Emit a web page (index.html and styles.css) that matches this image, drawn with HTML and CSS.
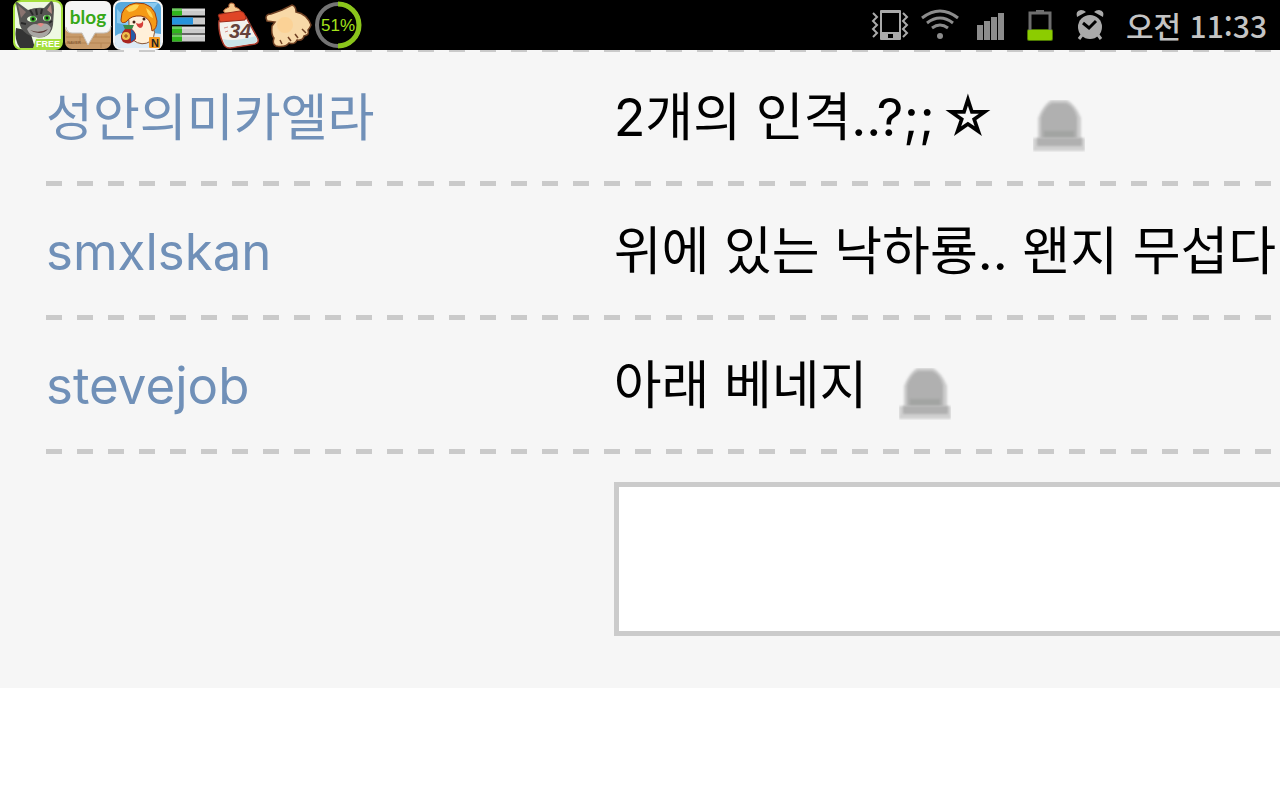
FILE: index.html
```
<!DOCTYPE html>
<html lang="ko">
  <head>
    <meta charset="UTF-8" />
    <meta name="viewport" content="width=device-width, initial-scale=1.0" />
    <title>댓글</title>
    <link rel="stylesheet" href="styles.css">
  </head>

  <body>
    <header class="status-bar">
      <div class="icons">
        <!-- talking cat -->
        <svg viewBox="0 0 50 50">
          <rect x="1" y="1" width="48" height="48" rx="7" fill="#eef8e2" stroke="#a5e03c" stroke-width="2" />
          <path d="M3 28 Q1 40 7 48 L22 48 L17 31Z" fill="#343434" />
          <path d="M3 4 Q1 2 4 2 L15 10 Q23 7 31 8 L38 1 Q41 1 41 10 L40 25 Q39 34 31 37 Q21 38 14 34 Q6 29 6 19Z" fill="#555553" />
          <path d="M5 5 L13 12 L8 18Z" fill="#8a7470" />
          <path d="M38 4 L39 14 L34 10Z" fill="#b28a84" />
          <path d="M17 10 L20 15 M23 9 L24 15 M29 9 L28 14 M8 23 L13 24 M39 21 L36 23" stroke="#292929" stroke-width="2" />
          <path d="M14 29 Q20 22 26 25 Q34 21 38 28 Q36 37 26 38 Q17 37 14 29Z" fill="#a8a6a3" />
          <path d="M17 30 Q26 34 35 29 Q32 33 26 33 Q21 33 17 30Z" fill="#5b3a38" />
          <path d="M24 24 Q28 22 31 24 L28 27Z" fill="#e58a86" />
          <ellipse cx="19" cy="19" rx="5" ry="3" fill="#e8f6dc" />
          <ellipse cx="34" cy="18" rx="4" ry="3" fill="#e8f6dc" />
          <circle cx="20" cy="19" r="3" fill="#3aa52d" />
          <circle cx="34" cy="18" r="3" fill="#3aa52d" />
          <circle cx="20" cy="19" r="1.5" fill="#111" />
          <circle cx="34" cy="18" r="1.4" fill="#111" />
          <path d="M20 48 L23 39 H49 V43 Q49 48 44 48Z" fill="#a5e03c" />
          <text x="35" y="47" class="label-free">FREE</text>
        </svg>
        <!-- blog -->
        <svg viewBox="0 0 50 50">
          <rect x="2" y="1" width="46" height="48" rx="7" fill="#c89b6a" />
          <path d="M3 37 H47 M3 43 H47 M17 36 V43 M33 31 V37 M38 43 V48" stroke="#b48453" />
          <path d="M9 1 H41 Q48 1 48 8 V26 Q48 33 41 33 H32 L25 45 L19 33 H9 Q2 33 2 26 V8 Q2 1 9 1Z" fill="#f5f5f5" />
          <path d="M3 27 Q4 33 9 33 H19 L25 45 L32 33 H41 Q47 33 48 26" fill="none" stroke="#c6c2bd" />
          <text x="25" y="24" class="label-blog">blog</text>
          <text x="11" y="44" class="label-naver">NAVER</text>
        </svg>
        <!-- mushroom game -->
        <svg viewBox="0 0 50 50">
          <rect x="1" y="1" width="48" height="48" rx="7" fill="#58a9dd" stroke="#f4f4f4" stroke-width="2" />
          <path d="M2 36 Q10 30 17 36 Q28 30 48 34 V42 Q48 48 42 48 H8 Q2 48 2 42Z" fill="#dceaf5" />
          <path d="M4 9 L20 26 L4 23Z M31 3 L45 3 L38 12Z" fill="#8bcaf0" />
          <path d="M16 23 Q14 14 23 12 Q36 11 38 25 Q45 32 38 41 Q29 47 20 40 Q15 33 16 23Z" fill="#fff0d9" stroke="#8b5736" />
          <path d="M8 20 Q8 5 23 3 Q42 2 44 21 Q44 29 39 31 Q38 17 28 16 Q18 15 13 22 Q8 24 8 20Z" fill="#f59a16" stroke="#9b3d10" />
          <path d="M13 9 Q20 3 26 5 Q24 11 16 12Z M33 8 Q39 11 40 18 Q35 17 33 8Z" fill="#ffd557" />
          <circle cx="21" cy="22" r="1.5" fill="#442013" />
          <circle cx="31" cy="19" r="1.5" fill="#442013" />
          <path d="M23 23 Q28 25 30 21 Q31 28 27 28 Q24 27 23 23Z" fill="#d6403a" />
          <path d="M12 29 Q5 36 10 42 Q17 46 23 39 Q24 33 19 29 L20 25 L11 25Z" fill="#a82620" />
          <path d="M10 25 H21 L19 29 H12Z" fill="#3b8b46" />
          <path d="M18 29 Q24 33 22 39 L18 42Z" fill="#265ba6" />
          <circle cx="13" cy="36" r="4" fill="#eec04c" />
          <path d="M11 36 H15 M13 34 V38" stroke="#934718" />
          <rect x="36" y="37" width="11" height="11" rx="1" fill="#f49a24" />
          <text x="42" y="47" class="label-n">N</text>
        </svg>
        <!-- process bars -->
        <svg viewBox="0 0 50 50">
          <path d="M9 12H42 M9 21H42 M9 30H42 M9 38H42" stroke="#cacaca" stroke-width="7" />
          <path d="M9 12H19 M9 30H19 M9 38H19" stroke="#30b51d" stroke-width="7" />
          <path d="M9 21H30" stroke="#2693dc" stroke-width="7" />
          <path d="M9 10H42 M9 28H42 M9 36H42" stroke="#fff" stroke-opacity=".3" stroke-width="2" />
        </svg>
        <!-- baby bottle -->
        <svg viewBox="0 0 50 50">
          <path d="M12 13 Q9 11 12 9 L16 7 Q15 3 19 3 Q22 3 22 7 Q29 9 28 14Z" fill="#f6cb91" stroke="#a95b31" />
          <path d="M6 21 L33 17 L45 39 Q46 43 42 44 L17 48 Q12 48 10 43 Q5 32 6 21Z" fill="#f2f2ed" stroke="#a73a2b" stroke-width="1.5" />
          <path d="M10 39 Q21 42 43 36 L44 41 L42 43 L17 47 Q12 47 10 39Z" fill="#c9e4e8" />
          <path d="M6 17 Q4 14 8 14 L27 11 Q31 11 33 17 L32 20 L7 22Z" fill="#df4526" stroke="#9b2c1c" />
          <path d="M11 28 L15 27 M12 32 L15 31" stroke="#d69086" />
          <text x="27" y="38" class="label-34">34</text>
        </svg>
        <!-- fist -->
        <svg viewBox="0 0 50 50">
          <path d="M3 18 Q3 14 8 14 L19 10 L29 5 Q33 6 33 12 Q44 14 48 25 Q47 28 45 30 Q47 35 41 36 Q40 41 34 40 Q32 45 26 43 Q22 48 13 46 Q9 44 11 38 Q8 35 9 26 L12 22 L4 21Z" fill="#f8d9a8" stroke="#704124" stroke-width="1.5" />
          <path d="M39 29 L43 33 M32 34 L35 38 M25 37 L28 41 M17 40 L19 44" stroke="#704124" stroke-width="1.5" />
          <circle cx="22" cy="25" r="8" fill="#ffc980" opacity=".45" />
        </svg>
        <!-- battery percent ring -->
        <svg viewBox="0 0 50 50">
          <circle cx="25" cy="25" r="21" fill="none" stroke="#747474" stroke-width="4" />
          <path d="M25 4 A21 21 0 0 1 25 46" fill="none" stroke="#8bc51b" stroke-width="5" />
          <text x="25" y="31" class="label-51">51%</text>
        </svg>
      </div>

      <div class="icons system">
        <!-- vibrate -->
        <svg viewBox="0 0 50 50">
          <path fill-rule="evenodd" d="M16 10 H35 Q36 10 36 11 V39 Q36 40 35 40 H16 Q15 40 15 39 V11 Q15 10 16 10Z M17 13 V32 H34 V13Z M23 34 V38 H28 V34Z" fill="#aaa" />
          <path d="M8 13 L12 17 L8 21 L12 25 L8 29 L12 33 L8 37 M38 13 L42 17 L38 21 L42 25 L38 29 L42 33 L38 37" fill="none" stroke="#aaa" stroke-width="2" />
        </svg>
        <!-- wifi -->
        <svg viewBox="0 0 50 50">
          <g fill="none" stroke="#8c8c8c" stroke-width="3">
            <path d="M7 18 Q25 4 43 18" />
            <path d="M12 23 Q25 13 38 23" />
            <path d="M17 28 Q25 22 33 28" />
          </g>
          <circle cx="25" cy="36" r="3" fill="#8c8c8c" />
        </svg>
        <!-- signal -->
        <svg viewBox="0 0 50 50">
          <path d="M12 25 H18 V40 H12Z M19 21 H25 V40 H19Z M26 17 H32 V40 H26Z M33 13 H39 V40 H33Z" fill="#8c8c8c" />
        </svg>
        <!-- battery -->
        <svg viewBox="0 0 50 50">
          <rect x="12" y="29" width="26" height="12" rx="2" fill="#4c7800" />
          <path d="M15 31 V13 H35 V31" fill="none" stroke="#6e6e6e" stroke-width="3" />
          <path d="M21 10 H29 V13 H21Z" fill="#6e6e6e" />
          <rect x="13" y="30" width="24" height="10" rx="1" fill="#8ccc00" />
        </svg>
        <!-- alarm -->
        <svg viewBox="0 0 50 50">
          <circle cx="25" cy="27" r="12" fill="#aaa" />
          <path d="M12 17 Q10 11 16 10 Q19 10 21 12Z M38 17 Q40 11 34 10 Q31 10 29 12Z" fill="#aaa" />
          <path d="M17 35 L14 39 M33 35 L36 39" stroke="#aaa" stroke-width="3" />
          <path d="M18 23 L24 28 L31 21" fill="none" stroke="#000" stroke-width="3" />
        </svg>
        <time class="clock">오전 11:33</time>
      </div>
    </header>

    <main class="comments">
      <ul class="comment-list">
        <li class="comment">
          <a href="#" class="name">성안의미카엘라</a>
          <p class="text">2개의 인격..?;;<span class="star">☆</span></p>
          <button class="report" aria-label="신고">
            <svg viewBox="0 0 52 52">
              <path d="M0 38 H52 V51 H0Z" fill="#d0d0d0" />
              <path d="M5 39 V18 Q10 5 18 0 H34 Q43 5 48 18 V39Z" fill="#cccccc" />
              <path d="M8 38 V17 Q12 6 19 3 H33 Q41 6 44 17 V38Z" fill="#b0b0b0" />
              <path d="M11 31 H41 V37 H11Z" fill="#a2a4a2" />
              <path d="M4 38 H49 V46 H4Z" fill="#b0b0b0" />
            </svg>
          </button>
        </li>
        <li class="comment">
          <a href="#" class="name">smxlskan</a>
          <p class="text">위에 있는 낙하룡.. 왠지 무섭다</p>
        </li>
        <li class="comment">
          <a href="#" class="name">stevejob</a>
          <p class="text">아래 베네지</p>
          <button class="report" aria-label="신고">
            <svg viewBox="0 0 52 52">
              <path d="M0 38 H52 V51 H0Z" fill="#d0d0d0" />
              <path d="M5 39 V18 Q10 5 18 0 H34 Q43 5 48 18 V39Z" fill="#cccccc" />
              <path d="M8 38 V17 Q12 6 19 3 H33 Q41 6 44 17 V38Z" fill="#b0b0b0" />
              <path d="M11 31 H41 V37 H11Z" fill="#a2a4a2" />
              <path d="M4 38 H49 V46 H4Z" fill="#b0b0b0" />
            </svg>
          </button>
        </li>
      </ul>
      <form class="write">
        <textarea aria-label="댓글 쓰기"></textarea>
      </form>
    </main>
  </body>
</html>
```
FILE: styles.css
```
* {
  margin: 0;
  padding: 0;
  box-sizing: border-box;
}

body {
  background-color: #ffffff;
  font-family: Inter, "Noto Sans CJK KR", sans-serif;
}

.status-bar {
  display: flex;
  justify-content: space-between;
  height: 50px;
  padding: 0 13px;
  background-color: #000000;
}

.icons {
  display: flex;
  align-items: center;
}

.icons svg {
  width: 50px;
  height: 50px;
}

.icons text {
  font-family: "Liberation Sans", sans-serif;
  font-weight: bold;
  text-anchor: middle;
}

.icons .label-free {
  font-size: 9px;
  fill: #ffffff;
}

.icons .label-blog {
  font-family: Lato, sans-serif;
  font-size: 19px;
  fill: #37a818;
}

.icons .label-naver {
  font-size: 4px;
  fill: #8a5f38;
}

.icons .label-n {
  font-size: 11px;
  fill: #222222;
}

.icons .label-34 {
  font-size: 20px;
  font-style: italic;
  fill: #65423a;
}

.icons .label-51 {
  font-size: 17px;
  font-weight: normal;
  fill: #a4e31b;
}

.clock {
  margin-left: 11px;
  color: #c4c4c4;
  font-family: "Noto Sans CJK KR", sans-serif;
  font-size: 30px;
  font-weight: 500;
  line-height: 50px;
  white-space: nowrap;
}

.comments {
  padding: 2px 0 52px 46px;
  background-color: #f6f6f6;
  background-image: repeating-linear-gradient(to right, #cacaca 0 16px, transparent 16px 31px);
  background-origin: content-box;
  background-position: 0 -2px;
  background-repeat: no-repeat;
  background-size: 100% 2px;
  overflow: hidden;
}

.comment-list {
  list-style: none;
}

.comment {
  display: grid;
  grid-template-columns: 46% auto 1fr;
  height: 134px;
  background: repeating-linear-gradient(to right, #cacaca 0 16px, transparent 16px 31px) left bottom / 100% 5px no-repeat;
}

.name,
.text {
  line-height: 132px;
  white-space: nowrap;
}

.name {
  color: #7090b8;
  font-size: 51px;
  text-decoration: none;
}

.text {
  color: #000000;
  font-size: 52px;
}

.star {
  margin: 0 6px;
}

.report {
  width: 52px;
  height: 52px;
  margin: 48px 0 0 32px;
  border: none;
  background: none;
  cursor: pointer;
}

.report svg {
  display: block;
  width: 52px;
  height: 52px;
}

.report path {
  filter: blur(1px);
}

.write {
  padding: 28px 0 0 46%;
}

.write textarea {
  display: block;
  width: 100%;
  height: 154px;
  border: 5px solid #cbcbcb;
  border-right: none;
  border-radius: 0;
  background-color: #ffffff;
  outline: none;
  resize: none;
}
```
